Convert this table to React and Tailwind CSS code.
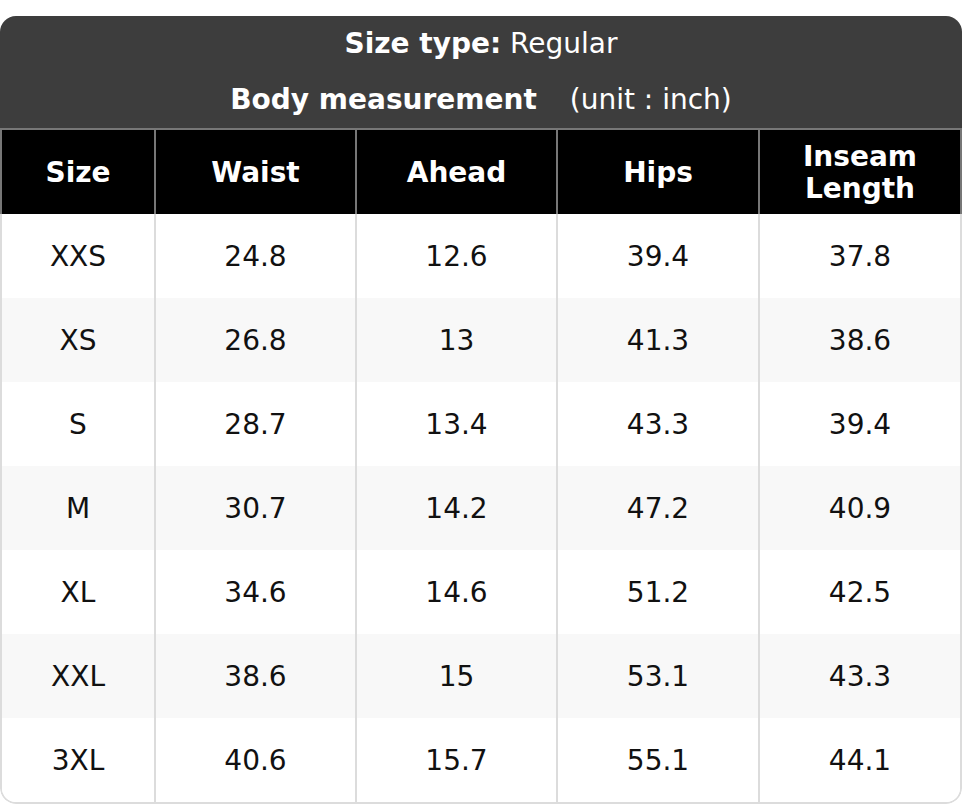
import React from 'react';

const columns = ['Size', 'Waist', 'Ahead', 'Hips', 'Inseam Length'];

const rows = [
  ['XXS', '24.8', '12.6', '39.4', '37.8'],
  ['XS', '26.8', '13', '41.3', '38.6'],
  ['S', '28.7', '13.4', '43.3', '39.4'],
  ['M', '30.7', '14.2', '47.2', '40.9'],
  ['XL', '34.6', '14.6', '51.2', '42.5'],
  ['XXL', '38.6', '15', '53.1', '43.3'],
  ['3XL', '40.6', '15.7', '55.1', '44.1'],
];

const grid = 'grid grid-cols-[154px_201px_201px_202px_1fr]';

const App = () => (
  <div className="min-h-screen bg-white pt-[16px] font-['DejaVu_Sans',sans-serif] text-[28px] leading-[32px]">
    <div className="w-[962px] rounded-[16px] overflow-hidden">
      {/* Title block */}
      <div className="bg-[#3d3d3d] text-white flex flex-col items-center pt-[12px] pb-[12px] gap-[24px]">
        <p>
          <span className="font-bold">Size type:</span> Regular
        </p>
        <p>
          <span className="font-bold">Body measurement</span>
          <span className="ml-[33px]">(unit : inch)</span>
        </p>
      </div>

      {/* Column headings */}
      <div className={`${grid} bg-black text-white font-bold border-t-2 border-x-2 border-[#777] h-[86px]`}>
        {columns.map((c, i) => (
          <div
            key={c}
            className={`flex items-center justify-center text-center px-[8px] pt-[2px] ${i < columns.length - 1 ? 'border-r-2 border-[#777]' : ''}`}
          >
            {c === 'Inseam Length' ? (
              <span>
                Inseam
                <br />
                Length
              </span>
            ) : (
              c
            )}
          </div>
        ))}
      </div>

      {/* Body */}
      <div className="border-x-2 border-b-2 border-[#dcdcdc] rounded-b-[16px] overflow-hidden text-[#111]">
        {rows.map((r, ri) => (
          <div key={r[0]} className={`${grid} h-[84px] ${ri % 2 === 1 ? 'bg-[#f8f8f8]' : 'bg-white'}`}>
            {r.map((v, i) => (
              <div
                key={i}
                className={`flex items-center justify-center pt-[2px] ${i < r.length - 1 ? 'border-r-2 border-[#dcdcdc]' : ''}`}
              >
                {v}
              </div>
            ))}
          </div>
        ))}
      </div>
    </div>
  </div>
);

export default App;
